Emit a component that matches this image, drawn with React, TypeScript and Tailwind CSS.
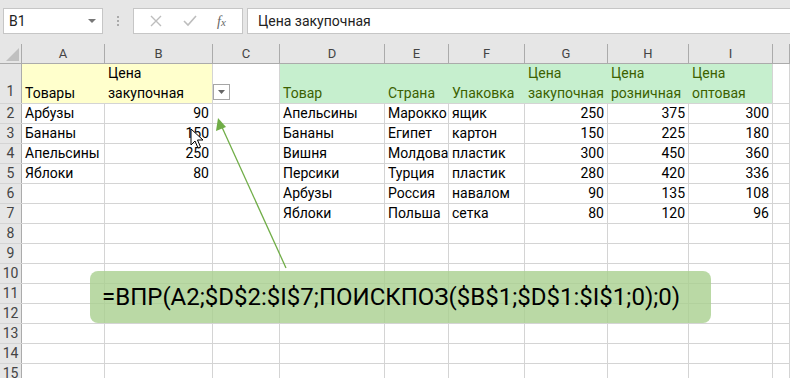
import React from "react";

/* Sheet data */

const cols = [
  { name: "A", w: "w-[83px]" },
  { name: "B", w: "w-[108px]" },
  { name: "C", w: "w-[67px]" },
  { name: "D", w: "w-[105px]" },
  { name: "E", w: "w-[64px]" },
  { name: "F", w: "w-[76px]" },
  { name: "G", w: "w-[83px]" },
  { name: "H", w: "w-[81px]" },
  { name: "I", w: "w-[84px]" },
  { name: "", w: "flex-1" },
];

const body: string[][] = [
  ["Арбузы", "90", "", "Апельсины", "Марокко", "ящик", "250", "375", "300"],
  ["Бананы", "150", "", "Бананы", "Египет", "картон", "150", "225", "180"],
  ["Апельсины", "250", "", "Вишня", "Молдова", "пластик", "300", "450", "360"],
  ["Яблоки", "80", "", "Персики", "Турция", "пластик", "280", "420", "336"],
  ["", "", "", "Арбузы", "Россия", "навалом", "90", "135", "108"],
  ["", "", "", "Яблоки", "Польша", "сетка", "80", "120", "96"],
];

const numCols = [1, 6, 7, 8];

const header1: { top?: string; bottom: string }[] = [
  { bottom: "Товары" },
  { top: "Цена", bottom: "закупочная" },
  { bottom: "" },
  { bottom: "Товар" },
  { bottom: "Страна" },
  { bottom: "Упаковка" },
  { top: "Цена", bottom: "закупочная" },
  { top: "Цена", bottom: "розничная" },
  { top: "Цена", bottom: "оптовая" },
  { bottom: "" },
];

const font = { fontFamily: "Roboto, 'Noto Sans', sans-serif" };

/* Formula bar */

const FormulaBar: React.FC = () => (
  <div className="h-[44px] bg-[#e6e6e6] flex items-start pt-[8px] pl-[3px]">
    <div className="w-[100px] h-[26px] bg-white border border-[#c6c6c6] flex items-center justify-between pl-[5px] pr-[6px] text-[14px] text-[#222]">
      <span>B1</span>
      <svg width="8" height="5" viewBox="0 0 8 5">
        <path d="M0 0 L8 0 L4 4 Z" fill="#777" />
      </svg>
    </div>
    <div className="w-[30px] h-[26px] flex flex-col items-center justify-center gap-[2px]">
      <span className="w-[2px] h-[2px] bg-[#aaa]" />
      <span className="w-[2px] h-[2px] bg-[#aaa]" />
      <span className="w-[2px] h-[2px] bg-[#aaa]" />
    </div>
    <div className="w-[110px] h-[26px] bg-white border border-[#c6c6c6] flex items-center justify-around px-[6px]">
      <svg width="12" height="12" viewBox="0 0 12 12">
        <path d="M1 1 L11 11 M11 1 L1 11" stroke="#bdbdbd" strokeWidth="1.4" />
      </svg>
      <svg width="14" height="12" viewBox="0 0 14 12">
        <path d="M1 6 L5 10 L13 1" stroke="#bdbdbd" strokeWidth="1.6" fill="none" />
      </svg>
      <span className="text-[14px] italic text-[#666]" style={{ fontFamily: "'Liberation Serif', serif" }}>
        f<span className="text-[11px]">x</span>
      </span>
    </div>
    <div className="ml-[4px] flex-1 h-[26px] bg-white border border-[#c6c6c6] border-r-0 flex items-center pl-[10px] text-[14px] text-[#222]">
      Цена закупочная
    </div>
  </div>
);

/* Grid */

const App: React.FC = () => {
  return (
    <div className="w-[790px] h-[378px] overflow-hidden relative bg-white" style={font}>
      <FormulaBar />

      {/* column headers */}
      <div className="flex h-[20px] bg-[#e6e6e6] border-b border-[#ababab]">
        <div className="w-[22px] shrink-0 relative border-r border-[#ababab]">
          <svg className="absolute right-[2px] bottom-[2px]" width="13" height="13" viewBox="0 0 13 13">
            <path d="M13 0 L13 13 L0 13 Z" fill="#c0c0c0" />
          </svg>
        </div>
        {cols.map((c, i) => (
          <div
            key={i}
            className={`${c.w} shrink-0 border-r border-[#ababab] flex items-center justify-center text-[13px] text-[#444]`}
          >
            {c.name}
          </div>
        ))}
      </div>

      {/* row 1 */}
      <div className="flex h-[40px] border-b border-[#d4d4d4]">
        <div className="w-[22px] shrink-0 bg-[#e6e6e6] border-r border-[#ababab] flex items-end justify-center pb-[1px] text-[14px] text-[#444]">
          1
        </div>
        {header1.map((h, i) => {
          const yellow = i < 2;
          const green = i >= 3 && i <= 8;
          const fill = yellow
            ? "bg-[#ffffcc] text-black"
            : green
              ? "bg-[#c6efce] text-[#3c6100]"
              : "bg-white";
          const edge =
            i === 0 || (i >= 3 && i < 8) ? "" : "border-r border-[#d4d4d4]";
          return (
            <div
              key={i}
              className={`${cols[i].w} shrink-0 ${fill} ${edge} flex flex-col justify-end px-[3px] text-[14px] leading-[20px] relative`}
            >
              {h.top && <span>{h.top}</span>}
              <span>{h.bottom}</span>
              {i === 2 && (
                <div className="absolute left-0 top-[20px] w-[17px] h-[16px] bg-white border border-[#a6a6a6] flex items-center justify-center">
                  <svg width="7" height="4" viewBox="0 0 7 4">
                    <path d="M0 0 L7 0 L3.5 4 Z" fill="#666" />
                  </svg>
                </div>
              )}
            </div>
          );
        })}
      </div>

      {/* rows 2..15 */}
      {Array.from({ length: 14 }).map((_, r) => {
        const row = body[r] ?? [];
        return (
          <div key={r} className="flex h-[20px] border-b border-[#d4d4d4]">
            <div className="w-[22px] shrink-0 bg-[#e6e6e6] border-r border-[#ababab] flex items-center justify-center text-[14px] text-[#444]">
              {r + 2}
            </div>
            {cols.map((c, i) => (
              <div
                key={i}
                className={`${c.w} shrink-0 border-r border-[#d4d4d4] flex items-center px-[3px] text-[14px] text-black whitespace-nowrap ${
                  numCols.includes(i) ? "justify-end" : "justify-start"
                }`}
              >
                {row[i] ?? ""}
              </div>
            ))}
          </div>
        );
      })}

      {/* arrow */}
      <svg className="absolute left-0 top-0 pointer-events-none" width="790" height="378">
        <line x1="286" y1="268" x2="221" y2="125" stroke="#70ad47" strokeWidth="1.3" />
        <path d="M218 118 L216 131 L226 127 Z" fill="#70ad47" />
      </svg>

      {/* mouse cursor */}
      <svg className="absolute left-[190px] top-[128px]" width="14" height="22" viewBox="0 0 14 22">
        <path
          d="M1 1 L1 17 L5 13 L8 20 L10.5 19 L7.5 12 L13 12 Z"
          fill="white"
          stroke="black"
          strokeWidth="1"
          strokeLinejoin="round"
        />
      </svg>

      {/* formula callout */}
      <div className="absolute left-[90px] top-[271px] w-[621px] h-[52px] rounded-[8px] bg-[#a9d08e]/80 flex items-center pl-[12px] text-[24px] text-black">
        =ВПР(A2;$D$2:$I$7;ПОИСКПОЗ($B$1;$D$1:$I$1;0);0)
      </div>
    </div>
  );
};

export default App;
